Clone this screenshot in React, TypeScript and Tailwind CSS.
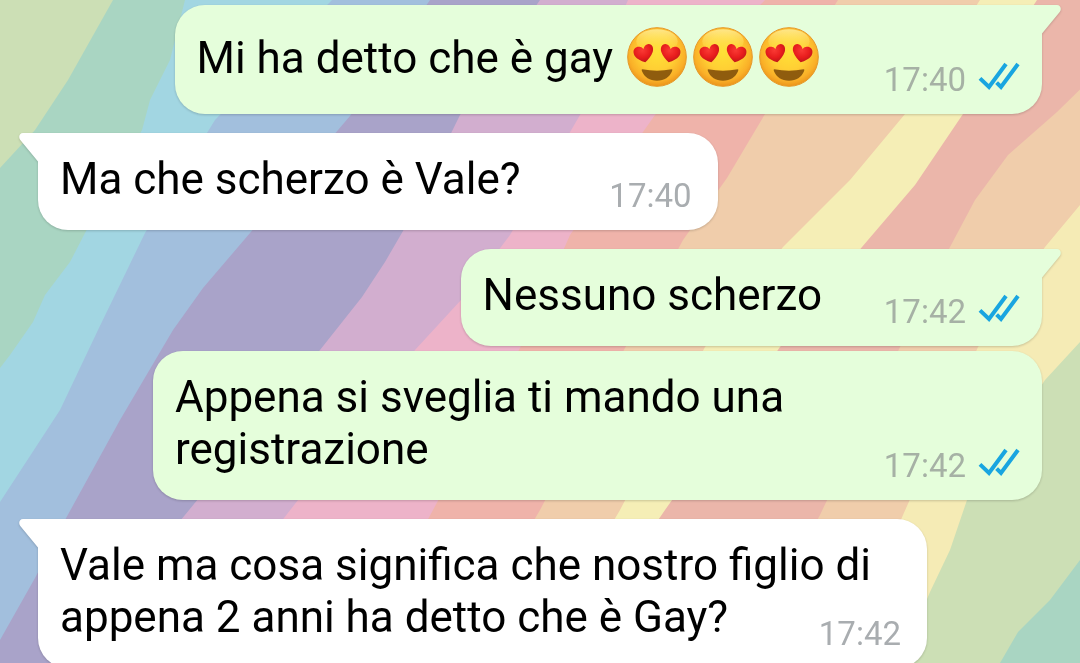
import type { ReactNode } from "react";
import clsx from "clsx";

type MessageProps = {
  time: string;
  sent?: boolean;
  tail?: boolean;
  children: ReactNode;
};

const stripes = [
  { color: "#a9d5c2", edge: "113,0 68,80 35,130 0,168" },
  { color: "#a2d6e2", edge: "185,0 170,60 150,100 142,130 85,233 70,262 45,295 33,322 10,355 0,368" },
  { color: "#a2bfdd", edge: "332,0 215,120 145,233 98,330 60,410 0,502" },
  { color: "#a9a3c9", edge: "430,0 350,116 250,233 203,288 173,330 120,420 65,520 35,578 0,640" },
  { color: "#d2aecf", edge: "540,0 460,115 403,231 385,262 362,297 320,350 185,515 60,663" },
  { color: "#edb3c9", edge: "628,0 580,115 510,235 461,300 415,350 284,518 180,663" },
  { color: "#efb3aa", edge: "765,0 655,115 570,235 520,348 433,510 350,663" },
  { color: "#f0cdab", edge: "838,0 765,114 727,178 683,240 625,348 540,510 450,663" },
  { color: "#f5eeb6", edge: "980,0 905,114 850,180 783,247 705,347 620,510 530,663" },
  { color: "#ebb6aa", edge: "1037,0 963,114 915,185 862,247 780,347 665,510 560,663" },
  { color: "#f0cdab", edge: "1110,60 1057,112 1008,155 975,200 950,247 900,347 820,515 740,663" },
  { color: "#f5ebb5", edge: "1110,175 1080,205 1045,247 978,347 903,515 840,663" },
  { color: "#ccdfb5", edge: "1110,310 1080,342 1045,380 967,500 950,550 930,592 900,663" },
  { color: "#a9d5c2", edge: "1110,525 1080,560 1050,600 1018,632 1000,663" },
];

function Wallpaper() {
  return (
    <svg
      className="absolute inset-0 -z-10 h-full w-full"
      viewBox="0 0 1080 663"
      preserveAspectRatio="none"
      aria-hidden="true"
    >
      <rect width="1080" height="663" fill="#ccdfb5" />
      {stripes.map((stripe) => (
        <polygon key={stripe.edge} points={`${stripe.edge} 0,663 1200,663 1200,0`} fill={stripe.color} />
      ))}
    </svg>
  );
}

function HeartEyes() {
  return (
    <svg
      className="mx-[3px] mt-[2px] mb-[2px] inline-block h-[60px] w-[60px] align-[-16px]"
      viewBox="0 0 180 180"
      role="img"
      aria-label="😍"
    >
      <defs>
        <radialGradient id="face" cx="0.5" cy="0.42" r="0.6">
          <stop offset="0" stopColor="#ffe036" />
          <stop offset="0.5" stopColor="#ffcf34" />
          <stop offset="0.8" stopColor="#fab028" />
          <stop offset="1" stopColor="#e88d18" />
        </radialGradient>
        <linearGradient id="shine" x1="0" y1="0" x2="0" y2="1">
          <stop offset="0" stopColor="#fff3a8" stopOpacity="0.75" />
          <stop offset="1" stopColor="#ffe840" stopOpacity="0" />
        </linearGradient>
        <radialGradient id="heart" cx="0.45" cy="0.35" r="0.65">
          <stop offset="0" stopColor="#fa3a34" />
          <stop offset="0.6" stopColor="#e81d1d" />
          <stop offset="1" stopColor="#bf151a" />
        </radialGradient>
      </defs>
      <circle cx="90" cy="90" r="88" fill="url(#face)" stroke="#e69a2a" strokeWidth="3" />
      <ellipse cx="90" cy="43" rx="62" ry="36" fill="url(#shine)" />
      <path
        d="M55 106C44 103 23 95 20 79C17 65 29 57 40 60C45 61 48 64 49 67C51 58 57 51 65 51C76 52 81 63 77 75C73 87 63 99 55 106Z"
        fill="url(#heart)"
      />
      <path
        d="M125 106C136 103 157 95 160 79C163 65 151 57 140 60C135 61 132 64 131 67C129 58 123 51 115 51C104 52 99 63 103 75C107 87 117 99 125 106Z"
        fill="url(#heart)"
      />
      <path
        d="M46 127Q90 135 134 127Q138 127 135 133C128 151 112 161 90 161C68 161 52 151 45 133Q42 127 46 127Z"
        fill="#8f5c0e"
      />
    </svg>
  );
}

function ReadTicks() {
  return (
    <svg
      className="h-[30px] w-[42px]"
      viewBox="0 0 42 30"
      fill="none"
      stroke="#19a5e0"
      strokeWidth="4"
      strokeLinejoin="miter"
      role="img"
      aria-label="Letto"
    >
      <path d="M2 16.4L11 25L28 2" />
      <path d="M18.6 20.6L23 25L40 2" />
    </svg>
  );
}

function Tail({ sent }: { sent: boolean }) {
  return (
    <svg
      className={clsx(
        "absolute top-0 h-[30px] w-5",
        sent ? "left-full -ml-px fill-[#e5fedb]" : "right-full -mr-px -scale-x-100 fill-white",
      )}
      viewBox="0 0 20 30"
      aria-hidden="true"
    >
      <path d="M0 0H16C19.5 0 21 4 18.7 7L1 28.5V30H0Z" />
    </svg>
  );
}

function Message({ time, sent = false, tail = false, children }: MessageProps) {
  return (
    <div
      className={clsx(
        "relative grid w-fit max-w-[889px] rounded-[30px] pt-5 pb-4 pl-[22px] drop-shadow-[0_1px_1px_rgba(0,0,0,0.18)]",
        sent ? "self-end bg-[#e5fedb] pr-[22px]" : "self-start bg-white pr-[26px]",
        tail && (sent ? "rounded-tr-none" : "rounded-tl-none"),
      )}
    >
      {tail && <Tail sent={sent} />}
      <p className="col-start-1 row-start-1 pb-[9px] text-[44px] leading-[52px] text-black">
        {children}
        {/* keeps the last line clear of the time */}
        <span className={clsx("inline-block", sent ? "w-[198px]" : "w-[171px]")} />
      </p>
      <div
        className={clsx(
          "col-start-1 row-start-1 flex items-start gap-3 self-end justify-self-end text-[33px] leading-9",
          sent ? "text-[#a6b1a5]" : "text-[#a9adb0]",
        )}
      >
        <time>{time}</time>
        {sent && <ReadTicks />}
      </div>
    </div>
  );
}

export default function App() {
  return (
    <main className="relative isolate flex h-screen flex-col overflow-hidden px-[38px] pt-[5px] font-[Roboto,sans-serif]">
      <Wallpaper />
      <div className="flex flex-col gap-[19px]">
        <Message time="17:40" sent tail>
          Mi ha detto che è gay <HeartEyes />
          <HeartEyes />
          <HeartEyes />
        </Message>
        <Message time="17:40" tail>
          Ma che scherzo è Vale?
        </Message>
        <div className="flex flex-col gap-[5px]">
          <Message time="17:42" sent tail>
            Nessuno scherzo
          </Message>
          <Message time="17:42" sent>
            Appena si sveglia ti mando una registrazione
          </Message>
        </div>
        <Message time="17:42" tail>
          Vale ma cosa significa che nostro figlio di appena 2 anni ha detto che è Gay?
        </Message>
      </div>
    </main>
  );
}
